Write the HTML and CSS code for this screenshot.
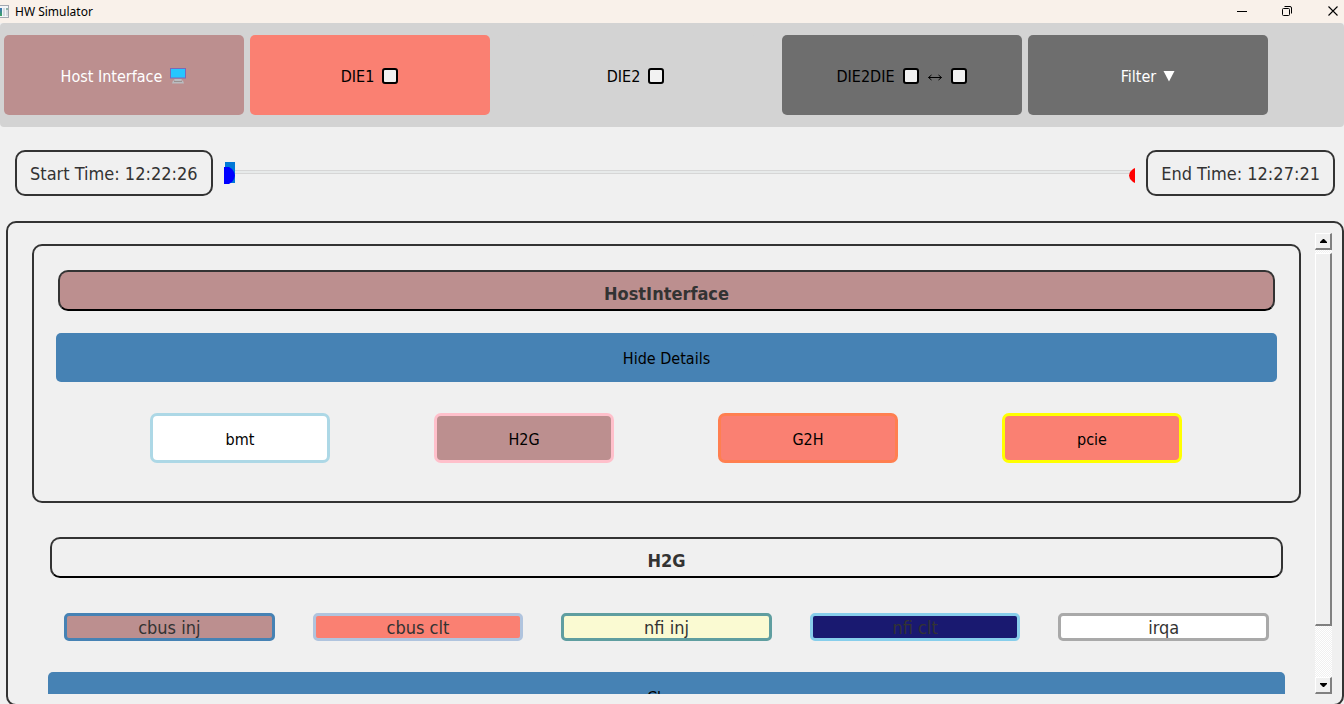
FILE: index.html
```html
<!DOCTYPE html>
<html lang="en">
<head>
<meta charset="utf-8">
<title>HW Simulator</title>
<link rel="stylesheet" href="styles.css">
</head>
<body>
<header class="titlebar">
  <svg class="app-icon" viewBox="0 0 9 14" width="9" height="14" aria-hidden="true">
    <defs><linearGradient id="g" x1="0" y1="0" x2="0" y2="1"><stop offset="0" stop-color="#3d74b8"/><stop offset="1" stop-color="#3da560"/></linearGradient></defs>
    <rect x="-4" y="0.500" width="12.500" height="12" fill="#f4f6f8" stroke="#a3a8b0"/>
    <rect x="0" y="3" width="2" height="8" fill="url(#g)"/>
    <rect x="3" y="3" width="2" height="8" fill="#d5dce2"/>
    <rect x="6" y="3" width="2" height="8" fill="#d8dce2"/>
    <rect x="6" y="3" width="2" height="2" fill="#8fb5a8"/>
  </svg>
  <h1 class="title">HW Simulator</h1>
  <div class="window-controls">
    <button class="window-button" aria-label="Minimize"><svg width="12" height="12" viewBox="0 0 12 12"><path d="M2 6.500H12" stroke="#000"/></svg></button>
    <button class="window-button" aria-label="Restore"><svg width="12" height="12" viewBox="0 0 12 12" fill="none" stroke="#000"><rect x="1.500" y="3.500" width="7" height="7" rx="1"/><path d="M3.500 1.500H9Q10.500 1.500 10.500 3V8.500"/></svg></button>
    <button class="window-button" aria-label="Close window"><svg width="12" height="12" viewBox="0 0 12 12"><path d="M1.500 1.500L10.500 10.500M10.500 1.500L1.500 10.500" stroke="#000" stroke-width="1.100"/></svg></button>
  </div>
</header>

<nav class="toolbar">
  <button class="tool tool-host">Host Interface
    <svg width="18" height="18" viewBox="0 0 18 18" aria-hidden="true"><rect x="1.500" y="1.500" width="15" height="9.500" fill="#26c6ff" stroke="#7a68b8"/><path d="M5 12H13L12 13.500H14L15 16.500H3L4 13.500H6Z" fill="#b9bcc0"/><path d="M5 14.500H13" stroke="#99918f"/></svg>
  </button>
  <button class="tool tool-die1">DIE1 <svg class="box" width="18" height="18" viewBox="0 0 18 18" aria-hidden="true"><rect x="2" y="2" width="14" height="14" rx="2" fill="#f2f2f2" stroke="#000" stroke-width="2"/></svg></button>
  <button class="tool tool-die2">DIE2 <svg class="box" width="18" height="18" viewBox="0 0 18 18" aria-hidden="true"><rect x="2" y="2" width="14" height="14" rx="2" fill="#f2f2f2" stroke="#000" stroke-width="2"/></svg></button>
  <button class="tool tool-link">DIE2DIE
    <svg class="box" width="18" height="18" viewBox="0 0 18 18" aria-hidden="true"><rect x="2" y="2" width="14" height="14" rx="2" fill="#f2f2f2" stroke="#000" stroke-width="2"/></svg>
    <svg width="16" height="18" viewBox="0 0 16 18" fill="none" stroke="#000" aria-hidden="true"><path d="M1.500 10.500H14.500M4.500 8L1.500 10.500L4.500 13M11.500 8L14.500 10.500L11.500 13"/></svg>
    <svg class="box" width="18" height="18" viewBox="0 0 18 18" aria-hidden="true"><rect x="2" y="2" width="14" height="14" rx="2" fill="#f2f2f2" stroke="#000" stroke-width="2"/></svg>
  </button>
  <button class="tool tool-filter">Filter <svg width="12" height="18" viewBox="0 0 12 18" aria-hidden="true"><path d="M0.500 4H11.500L6 14.500Z" fill="#fff"/></svg></button>
</nav>

<section class="timeline">
  <div class="time">Start Time: 12:22:26</div>
  <div class="slider">
    <input class="range" type="range" min="0" max="100" value="0" aria-label="Simulation time">
    <svg class="marker marker-start" width="11" height="17" viewBox="0 0 11 17" aria-hidden="true"><path d="M0 0H5L8 2L10 5L11 8.500L10 12L8 15L5 17H0Z" fill="#00f"/></svg>
    <svg class="marker marker-end" width="6" height="15" viewBox="0 0 6 15" aria-hidden="true"><path d="M6 0L4 1L1 4L0 7.500L1 11L4 14L6 15Z" fill="#f00"/></svg>
  </div>
  <div class="time">End Time: 12:27:21</div>
</section>

<main class="panel">
  <div class="content">
    <section class="group">
      <h2 class="heading heading-host">HostInterface</h2>
      <button class="wide">Hide Details</button>
      <div class="modules">
        <button class="module bmt">bmt</button>
        <button class="module h2g">H2G</button>
        <button class="module g2h">G2H</button>
        <button class="module pcie">pcie</button>
      </div>
    </section>
    <section class="details">
      <h2 class="heading">H2G</h2>
      <div class="signals">
        <div class="signal cbus-inj">cbus inj</div>
        <div class="signal cbus-clt">cbus clt</div>
        <div class="signal nfi-inj">nfi inj</div>
        <div class="signal nfi-clt">nfi clt</div>
        <div class="signal irqa">irqa</div>
      </div>
      <button class="wide">Close</button>
    </section>
  </div>
  <div class="scrollbar">
    <button class="scroll-button" aria-label="Scroll up"><svg width="7" height="4" viewBox="0 0 7 4"><path d="M3 0H4L7 3V4H0V3Z"/></svg></button>
    <div class="scroll-track"><div class="scroll-thumb"></div></div>
    <button class="scroll-button" aria-label="Scroll down"><svg width="7" height="4" viewBox="0 0 7 4"><path d="M0 0H7V1L4 4H3L0 1Z"/></svg></button>
  </div>
</main>
</body>
</html>
```
FILE: styles.css
```css
* { box-sizing: border-box; }

body {
  margin: 0;
  height: 100vh;
  display: flex;
  flex-direction: column;
  overflow: hidden;
  background: #f0f0f0;
  color: #333;
  font-family: "DejaVu Sans Condensed", "Noto Sans", sans-serif;
  font-size: 18px;
}

button { font: inherit; color: #000; padding: 0; border: 0; }
h1, h2 { margin: 0; }

.titlebar {
  display: flex;
  align-items: center;
  height: 23px;
  flex: none;
  background: #f9f1ea;
  color: #000;
}
.title {
  margin-left: 6px;
  font: 400 12px/16px "Noto Sans", sans-serif;
}
.window-controls { display: flex; margin-left: auto; }
.window-button {
  display: flex;
  align-items: center;
  justify-content: flex-end;
  width: 46px;
  height: 20px;
  padding: 0 5px 2px 0;
  background: none;
}

.toolbar {
  display: flex;
  gap: 6px;
  flex: none;
  padding: 12px 4px;
  border-radius: 4px;
  background: #d3d3d3;
}
.tool {
  display: flex;
  align-items: center;
  justify-content: center;
  gap: 7px;
  flex: 0 1 240px;
  height: 80px;
  padding-top: 2px;
  border-radius: 5px;
  font-size: 16px;
}
.tool-host { background: #bc8f8f; color: #fff; }
.tool-die1 { background: #fa8072; }
.tool-die2 { background: #d3d3d3; margin: 0 20px; }
.tool-link, .tool-filter { background: #6e6e6e; }
.tool-filter { color: #fff; }

.timeline {
  display: flex;
  align-items: center;
  gap: 11px;
  flex: none;
  padding: 23px 9px 25px 15px;
}
.time {
  height: 46px;
  padding: 1px 13px 0;
  border: 2px solid #333;
  border-radius: 10px;
  line-height: 42px;
  font-size: 18px;
  white-space: nowrap;
}
.slider { position: relative; flex: 1; display: flex; height: 22px; }
.range {
  appearance: none;
  width: 100%;
  height: 20px;
  margin: 0;
  background: none;
}
.range::-webkit-slider-runnable-track {
  height: 4px;
  border: 1px solid #d6d6d6;
  background: #e7eaea;
}
.range::-webkit-slider-thumb {
  appearance: none;
  width: 10px;
  height: 21px;
  margin-top: -9px;
  background: #0078d7;
}
.marker { position: absolute; }
.marker-start { left: 0; top: 5px; }
.marker-end { right: 0; top: 6px; }

.panel {
  display: flex;
  flex: 1;
  min-height: 0;
  margin: 0 0 -2px 6px;
  padding: 10px;
  border: 2px solid #333;
  border-radius: 10px;
}
.content {
  flex: 1;
  min-width: 0;
  overflow: hidden;
  padding: 11px 14px 0;
}
.group {
  padding: 24px 22px 38px;
  border: 2px solid #333;
  border-radius: 10px;
}
.heading {
  height: 41px;
  margin: 0 2px;
  padding-top: 4px;
  border: 2px solid #333;
  border-bottom-color: #000;
  border-radius: 10px;
  text-align: center;
  font-size: 18px;
  font-weight: 700;
  line-height: 36px;
}
.heading-host { background: #bc8f8f; }
.wide {
  display: block;
  width: 100%;
  height: 49px;
  padding-top: 2px;
  border-radius: 5px;
  background: #4682b4;
  font-size: 16px;
}
.group .wide { margin-top: 22px; }
.modules {
  display: grid;
  grid-template-columns: repeat(4, 1fr);
  justify-items: center;
  margin-top: 31px;
  padding: 0 43px 0 42px;
}
.module {
  width: 180px;
  height: 50px;
  padding-top: 2px;
  border: 3px solid;
  border-radius: 7px;
  font-size: 16px;
}
.bmt { background: #fff; border-color: #add8e6; }
.h2g { background: #bc8f8f; border-color: #ffc0cb; }
.g2h { background: #fa8072; border-color: #ff7f50; }
.pcie { background: #fa8072; border-color: #ff0; }

.details { padding: 34px 16px 0; }
.signals {
  display: grid;
  grid-template-columns: repeat(5, 1fr);
  gap: 38px;
  margin: 35px 16px 31px;
}
.signal {
  height: 28px;
  border: 3px solid;
  border-radius: 5px;
  text-align: center;
  font-size: 18px;
  line-height: 24px;
}
.cbus-inj { background: #bc8f8f; border-color: #4682b4; }
.cbus-clt { background: #fa8072; border-color: #b0c4de; }
.nfi-inj { background: #fafad2; border-color: #5f9ea0; }
.nfi-clt { background: #191970; border-color: #87ceeb; }
.irqa { background: #fff; border-color: #a9a9a9; }

.scrollbar { display: flex; flex-direction: column; width: 17px; }
.scroll-button, .scroll-thumb {
  border: 1px solid #fff;
  border-right: 2px solid #808080;
  border-bottom: 2px solid #808080;
  background: #f0f0f0;
}
.scroll-button {
  display: flex;
  align-items: center;
  justify-content: center;
  flex: none;
  height: 17px;
}
.scroll-track {
  flex: 1;
  padding-top: 3px;
  background: repeating-conic-gradient(#fff 0 25%, #f0f0f0 0 50%) 0 0 / 2px 2px;
}
.scroll-thumb { height: 88%; }
```
